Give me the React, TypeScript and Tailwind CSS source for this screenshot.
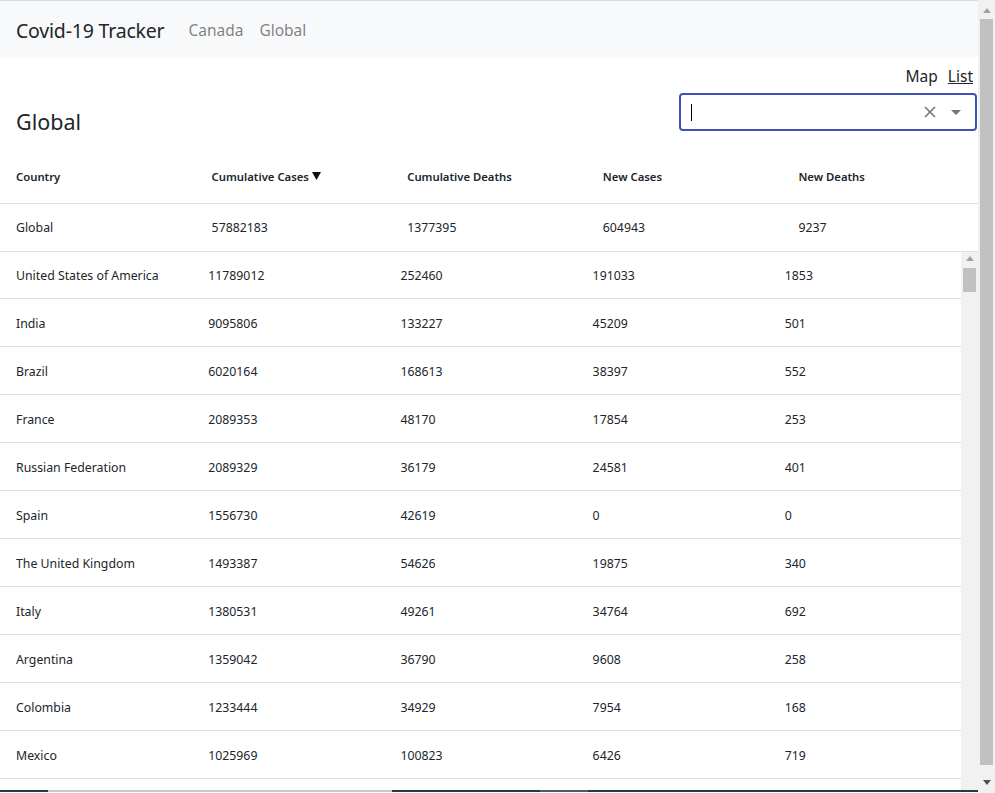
import React from "react";

type Row = { country: string; cases: number; deaths: number; newCases: number; newDeaths: number };

const rows: Row[] = [
  { country: "United States of America", cases: 11789012, deaths: 252460, newCases: 191033, newDeaths: 1853 },
  { country: "India", cases: 9095806, deaths: 133227, newCases: 45209, newDeaths: 501 },
  { country: "Brazil", cases: 6020164, deaths: 168613, newCases: 38397, newDeaths: 552 },
  { country: "France", cases: 2089353, deaths: 48170, newCases: 17854, newDeaths: 253 },
  { country: "Russian Federation", cases: 2089329, deaths: 36179, newCases: 24581, newDeaths: 401 },
  { country: "Spain", cases: 1556730, deaths: 42619, newCases: 0, newDeaths: 0 },
  { country: "The United Kingdom", cases: 1493387, deaths: 54626, newCases: 19875, newDeaths: 340 },
  { country: "Italy", cases: 1380531, deaths: 49261, newCases: 34764, newDeaths: 692 },
  { country: "Argentina", cases: 1359042, deaths: 36790, newCases: 9608, newDeaths: 258 },
  { country: "Colombia", cases: 1233444, deaths: 34929, newCases: 7954, newDeaths: 168 },
  { country: "Mexico", cases: 1025969, deaths: 100823, newCases: 6426, newDeaths: 719 },
];

const font = { fontFamily: '"Noto Sans", "Open Sans", sans-serif' };

function Arrow({ dir, color }: { dir: "up" | "down"; color: string }) {
  return (
    <svg width="8" height="5" viewBox="0 0 8 5">
      <path d={dir === "up" ? "M0 5 L4 0 L8 5 Z" : "M0 0 L4 5 L8 0 Z"} fill={color} />
    </svg>
  );
}

function Navbar() {
  return (
    <div className="h-[58px] border-t border-[#dcdcdc] bg-[#f8f9fa] flex items-center px-4 pt-[2px]">
      <span className="text-[19.5px] text-[#212529] mr-4 tracking-[-0.2px]">Covid-19 Tracker</span>
      <a className="px-2 text-[15.5px] text-black/50">Canada</a>
      <a className="px-2 text-[15.5px] text-black/50">Global</a>
    </div>
  );
}

function CountrySelect() {
  return (
    <div className="w-[298px] h-[38px] mr-[1px] rounded border-2 border-[#3f51b5] flex items-center pl-[10px] pr-[14px]">
      <span className="w-px h-[17px] bg-black" />
      <div className="flex-1" />
      <svg width="12" height="12" viewBox="0 0 12 12" className="mr-[15px]">
        <path d="M1 1 L11 11 M11 1 L1 11" stroke="#757575" strokeWidth="1.6" />
      </svg>
      <svg width="10" height="5" viewBox="0 0 10 5">
        <path d="M0 0 L5 5 L10 0 Z" fill="#757575" />
      </svg>
    </div>
  );
}

export default function App() {
  return (
    <div className="h-[793px] overflow-hidden flex bg-white text-[#212529]" style={font}>
      <div className="w-[978px] flex flex-col">
        <Navbar />
        <div className="flex justify-end gap-[10px] pr-[5px] mt-[6px] h-[24px] leading-6 text-[15.5px]">
          <a>Map</a>
          <a className="underline">List</a>
        </div>
        <div className="flex justify-between items-start h-[57px] mt-[5px]">
          <h2 className="ml-4 mt-[14px] text-[21.5px] leading-[29px]">Global</h2>
          <CountrySelect />
        </div>
        <div className="grid grid-cols-5 h-[54px] pt-[2px] border-b border-[#e0e0e0] items-center text-[11.3px] font-semibold">
          <div className="pl-4">Country</div>
          <div className="pl-4 flex items-center">
            <span>Cumulative Cases</span>
            <svg width="9" height="8" viewBox="0 0 9 8" className="ml-[3px] -mt-[4px]">
              <path d="M0 0 L9 0 L4.5 8 Z" fill="#111" />
            </svg>
          </div>
          <div className="pl-4">Cumulative Deaths</div>
          <div className="pl-4">New Cases</div>
          <div className="pl-4">New Deaths</div>
        </div>
        <div className="grid grid-cols-5 h-[48px] pt-[2px] border-b border-[#e0e0e0] items-center text-[12.3px]">
          <div className="pl-4">Global</div>
          <div className="pl-4">57882183</div>
          <div className="pl-4">1377395</div>
          <div className="pl-4">604943</div>
          <div className="pl-4">9237</div>
        </div>
        <div className="flex h-[538px] overflow-hidden">
          <div className="w-[961px] text-[12.3px]">
            {rows.map((r, i) => (
              <div
                key={r.country}
                className={
                  i === 0
                    ? "grid grid-cols-5 h-[47px] pt-[2px] border-b border-[#e0e0e0] items-center"
                    : "grid grid-cols-5 h-[48px] pt-[3px] border-b border-[#e0e0e0] items-center"
                }
              >
                <div className="pl-4">{r.country}</div>
                <div className="pl-4">{r.cases}</div>
                <div className="pl-4">{r.deaths}</div>
                <div className="pl-4">{r.newCases}</div>
                <div className="pl-4">{r.newDeaths}</div>
              </div>
            ))}
          </div>
          <div className="w-[17px] bg-[#f1f1f1] flex flex-col items-center pt-[4px]">
            <Arrow dir="up" color="#a3a3a3" />
            <div className="w-[13px] h-[24px] bg-[#c1c1c1] mt-[7px]" />
          </div>
        </div>
        <div className="h-[2px] flex">
          <div className="w-[48px] bg-[#233a44]" />
          <div className="w-[344px] bg-[#c8c8c8]" />
          <div className="w-[148px] bg-[#233a44]" />
          <div className="w-[48px] bg-[#4b5d66]" />
          <div className="flex-1 bg-[#233a44]" />
        </div>
      </div>
      <div className="w-[17px] bg-[#f1f1f1] flex flex-col items-center pt-[8px]">
        <Arrow dir="up" color="#a3a3a3" />
        <div className="w-[13px] h-[746px] bg-[#c1c1c1] mt-[6px]" />
        <div className="mt-[15px]">
          <Arrow dir="down" color="#505050" />
        </div>
      </div>
    </div>
  );
}
